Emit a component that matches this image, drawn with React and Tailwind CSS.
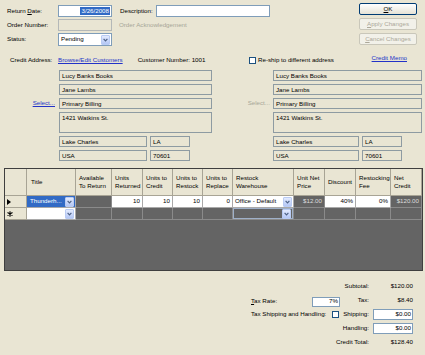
import React from 'react';

const Drop = ({ tall = false }) => (
  <div className={`flex w-[9px] shrink-0 items-center justify-center rounded-[1px] border border-[#b9cbf3] bg-gradient-to-b from-[#e3ebfe] to-[#b4c7f5] ${tall ? 'h-[11px]' : 'h-[10px]'}`}>
    <svg width="5" height="4" viewBox="0 0 5 4">
      <path d="M0.6 0.8 L2.5 2.8 L4.4 0.8" stroke="#4d6185" strokeWidth="1.2" fill="none" />
    </svg>
  </div>
);

const Box = ({ children, className = '' }) => (
  <div className={`h-[11px] border border-[#8e9ba2] bg-[#e9e5d3] pl-[2px] pt-[1px] leading-[8px] ${className}`}>
    {children}
  </div>
);

const Address = ({ slot, select, selectClass, boxW, cityW }) => (
  <div className="flex flex-col gap-[3px]">
    {[
      'Lucy Banks Books',
      'Jane Lambs',
      'Primary Billing',
    ].map((t, i) => (
      <div key={t} className="flex items-center">
        <div className={`${slot} flex justify-end pr-[4px]`}>
          {i === 2 && <span className={selectClass}>{select}</span>}
        </div>
        <Box className={boxW}>{t}</Box>
      </div>
    ))}
    <div className="flex">
      <div className={slot}></div>
      <Box className={`${boxW} h-[21px]`}>1421 Watkins St.</Box>
    </div>
    {[
      ['Lake Charles', 'LA'],
      ['USA', '70601'],
    ].map(([a, b]) => (
      <div key={a} className="flex gap-[3px]">
        <div className={`${slot} -mr-[3px]`}></div>
        <Box className={cityW}>{a}</Box>
        <Box className="w-[40px]">{b}</Box>
      </div>
    ))}
  </div>
);

const headers = [
  { key: 'title', label: ['Title'], pl: 'pl-[4px]' },
  { key: 'avail', label: ['Available', 'To Return'], pl: 'pl-[3px]' },
  { key: 'ret', label: ['Units', 'Returned'], pl: 'pl-[3px]' },
  { key: 'cred', label: ['Units to', 'Credit'], pl: 'pl-[3px]' },
  { key: 'rest', label: ['Units to', 'Restock'], pl: 'pl-[3px]' },
  { key: 'repl', label: ['Units to', 'Replace'], pl: 'pl-[3px]' },
  { key: 'wh', label: ['Restock', 'Warehouse'], pl: 'pl-[3px]' },
  { key: 'unp', label: ['Unit Net', 'Price'], pl: 'pl-[3px]' },
  { key: 'disc', label: ['Discount'], pl: 'pl-[3px]' },
  { key: 'fee', label: ['Restocking', 'Fee'], pl: 'pl-[3px]' },
  { key: 'net', label: ['Net', 'Credit'], pl: 'pl-[3px]' },
];

const cellDark = 'h-[12px] border-r border-b border-[#8a8a8a] bg-[#646464]';
const cellWhite = 'h-[12px] border-r border-b border-[#a9a9a9] bg-white flex items-center justify-end pr-[2px] text-black';
const rowHead = 'h-[12px] border-r border-b border-[#a8a495] bg-[#e9e5d3] flex items-center pl-[2px]';

export default function App() {
  return (
    <div className="relative h-[355px] w-[425px] overflow-hidden bg-[#e9e5d3] font-['Liberation_Sans',Arial,sans-serif] text-[6.2px] leading-none text-black">
      {/* top fields */}
      <div className="flex items-start">
        <div className="flex flex-1 flex-col gap-[2px] pt-[5px]">
          <div className="flex h-[12px] items-center">
            <span className="ml-[7px] w-[51px]">Return <span className="underline">D</span>ate:</span>
            <div className="flex h-full w-[54px] items-center justify-end border border-[#7f9db9] bg-white pr-[1px]">
              <span className="bg-[#316ac5] px-[1px] py-[1px] text-white">3/26/2008</span>
            </div>
            <span className="ml-[8px] w-[36px]">Description:</span>
            <div className="h-full w-[114px] border border-[#7f9db9] bg-white"></div>
          </div>
          <div className="flex h-[12px] items-center">
            <span className="ml-[7px] w-[51px]">Order Number:</span>
            <div className="h-full w-[54px] border border-[#b4b8b8] bg-[#e9e5d3]"></div>
            <span className="ml-[7px] text-[#a7a597]">Order Acknowledgement</span>
          </div>
          <div className="flex h-[13px] items-center">
            <span className="ml-[7px] w-[51px]">Status:</span>
            <div className="flex h-full w-[54px] items-center justify-between border border-[#7f9db9] bg-white pl-[2px] pr-[1px]">
              <span>Pending</span>
              <Drop />
            </div>
          </div>
        </div>
        <div className="mr-[8px] flex w-[58px] flex-col gap-[3px] pt-[3px]">
          <div className="flex h-[12px] items-center justify-center rounded-[2px] border border-[#003c74] bg-gradient-to-b from-white to-[#e6e3d6]">
            <span><span className="underline">O</span>K</span>
          </div>
          <div className="flex h-[12px] items-center justify-center rounded-[2px] border border-[#c9c7ba] bg-[#f2f1e9] text-[#aca899]">
            <span><span className="underline">A</span>pply Changes</span>
          </div>
          <div className="flex h-[12px] items-center justify-center rounded-[2px] border border-[#c9c7ba] bg-[#f2f1e9] text-[#aca899]">
            <span><span className="underline">C</span>ancel Changes</span>
          </div>
        </div>
      </div>

      {/* addresses */}
      <div className="mt-[9px] flex">
        <div className="flex w-[218px] flex-col">
          <div className="flex h-[10px] items-center">
            <span className="ml-[10px] w-[48px]">Credit Address:</span>
            <span className="text-[#2332c8] underline">Browse/Edit Customers</span>
            <span className="ml-[15px]">Customer Number: 1001</span>
          </div>
          <div className="mt-[5px]">
            <Address slot="w-[59px]" select="Select..." selectClass="text-[#2332c8] underline" boxW="w-[153px]" cityW="w-[88px]" />
          </div>
        </div>
        <div className="flex flex-1 flex-col">
          <div className="flex h-[10px] items-center">
            <div className="ml-[31px] h-[7px] w-[7px] border border-[#1c5180] bg-white"></div>
            <span className="ml-[2px]">Re-ship to different address</span>
            <span className="mb-[4px] ml-auto mr-[18px] text-[#2332c8] underline">Credit Memo</span>
          </div>
          <div className="mt-[5px]">
            <Address slot="w-[55px]" select="Select..." selectClass="text-[#a7a597] -mr-[1px]" boxW="w-[149px]" cityW="w-[86px]" />
          </div>
        </div>
      </div>

      {/* grid */}
      <div className="ml-[4px] mt-[7px] h-[103px] w-[419px] border border-[#3f3f3f] bg-[#646464]">
        <div className="grid grid-cols-[22px_49px_36px_31px_30px_30px_30px_61px_31px_31px_35px_31px]">
          <div className="h-[27px] border-r border-b border-[#a8a495] bg-[#e9e5d3]"></div>
          {headers.map((h) => (
            <div key={h.key} className={`flex h-[27px] flex-col justify-center border-r border-b border-[#a8a495] bg-[#e9e5d3] leading-[8px] ${h.pl}`}>
              {h.label.map((l) => (
                <span key={l} className="whitespace-nowrap">{l}</span>
              ))}
            </div>
          ))}

          {/* row 1 */}
          <div className={rowHead}>
            <svg width="4" height="6" viewBox="0 0 4 6"><path d="M0 0 L4 3 L0 6 Z" fill="#000" /></svg>
          </div>
          <div className="flex h-[12px] items-center justify-between border-r border-b border-[#a9a9a9] bg-[#316ac5] pl-[3px] pr-[1px] text-white">
            <span>Thunderh...</span>
            <Drop />
          </div>
          <div className={cellDark}></div>
          <div className={cellWhite}>10</div>
          <div className={cellWhite}>10</div>
          <div className={cellWhite}>10</div>
          <div className={cellWhite}>0</div>
          <div className="flex h-[12px] items-center justify-between border-r border-b border-[#a9a9a9] bg-white pl-[2px] pr-[1px]">
            <span>Office - Default</span>
            <Drop />
          </div>
          <div className={`${cellDark} flex items-center justify-end pr-[2px] text-[#dcdcdc]`}>$12.00</div>
          <div className={cellWhite}>40%</div>
          <div className={cellWhite}>0%</div>
          <div className={`${cellDark} flex items-center justify-end pr-[2px] text-[#dcdcdc]`}>$120.00</div>

          {/* row 2 */}
          <div className={rowHead}>
            <svg width="6" height="6" viewBox="0 0 6 6">
              <path d="M3 0.3 V5.7 M0.5 1.6 L5.5 4.4 M0.5 4.4 L5.5 1.6" stroke="#000" strokeWidth="1.1" />
            </svg>
          </div>
          <div className="flex h-[12px] items-center justify-end border-r border-b border-[#a9a9a9] bg-white pr-[1px]">
            <Drop />
          </div>
          <div className={cellDark}></div>
          <div className={cellDark}></div>
          <div className={cellDark}></div>
          <div className={cellDark}></div>
          <div className={cellDark}></div>
          <div className={`${cellDark} flex items-center justify-end p-[0px]`}>
            <div className="flex h-[11px] w-full items-center justify-end border border-[#9fb0c8] pr-[1px]">
              <Drop />
            </div>
          </div>
          <div className={cellDark}></div>
          <div className={cellDark}></div>
          <div className={cellDark}></div>
          <div className={cellDark}></div>
        </div>
      </div>

      {/* totals */}
      <div className="ml-[251px] mt-[8px] grid grid-cols-[89px_33px_40px] grid-rows-[14px_14px_14px_14px_14px] gap-x-[0px]">
        <div></div>
        <div className="flex items-center justify-end pl-[6px] pr-[4px]">Subtotal:</div>
        <div className="flex items-center justify-end">$120.00</div>

        <div className="flex items-center justify-between pt-[3px]">
          <span><span className="underline">T</span>ax Rate:</span>
          <div className="flex h-[10px] w-[28px] items-center justify-end border border-[#7f9db9] bg-white pr-[1px]">7%</div>
        </div>
        <div className="flex items-center justify-end pr-[4px]">Tax:</div>
        <div className="flex items-center justify-end">$8.40</div>

        <div className="flex items-center justify-between">
          <span>Tax Shipping and Handling:</span>
          <div className="mr-[1px] h-[7px] w-[7px] border border-[#1c5180] bg-white"></div>
        </div>
        <div className="flex items-center justify-end pr-[4px]">Shipping:</div>
        <div className="flex items-center">
          <div className="flex h-[11px] w-full items-center justify-end border border-[#7f9db9] bg-white pr-[1px]">$0.00</div>
        </div>

        <div></div>
        <div className="flex items-center justify-end pr-[4px]">Handling:</div>
        <div className="flex items-center">
          <div className="flex h-[11px] w-full items-center justify-end border border-[#7f9db9] bg-white pr-[1px]">$0.00</div>
        </div>

        <div></div>
        <div className="flex items-center justify-end whitespace-nowrap pr-[4px]">Credit Total:</div>
        <div className="flex items-center justify-end">$128.40</div>
      </div>
    </div>
  );
}
